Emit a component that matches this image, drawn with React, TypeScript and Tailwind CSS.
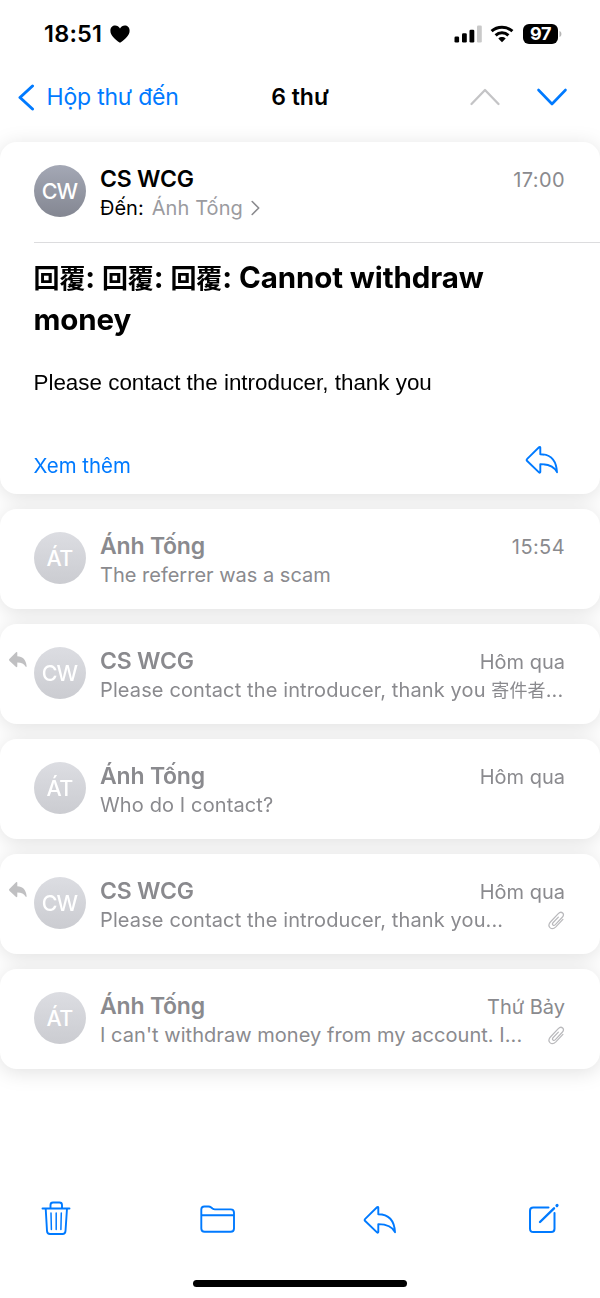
import type { ReactNode } from "react";

// ─── Data ──────────────────────────────────────────────────────

type Message = {
  initials: string;
  sender: string;
  preview: ReactNode;
  time: string;
  replied?: boolean;
  attachment?: boolean;
};

const MESSAGES: Message[] = [
  {
    initials: "ÁT",
    sender: "Ánh Tống",
    preview: <span className="tracking-normal">The referrer was a scam</span>,
    time: "15:54",
  },
  {
    initials: "CW",
    sender: "CS WCG",
    preview: (
      <>
        Please contact the introducer, thank you <span className="text-[18px]">寄件者</span>...
      </>
    ),
    time: "Hôm qua",
    replied: true,
  },
  { initials: "ÁT", sender: "Ánh Tống", preview: "Who do I contact?", time: "Hôm qua" },
  {
    initials: "CW",
    sender: "CS WCG",
    preview: "Please contact the introducer, thank you...",
    time: "Hôm qua",
    replied: true,
    attachment: true,
  },
  {
    initials: "ÁT",
    sender: "Ánh Tống",
    preview: <span className="tracking-[0.05px]">I can't withdraw money from my account. I...</span>,
    time: "Thứ Bảy",
    attachment: true,
  },
];

// ─── Icons ─────────────────────────────────────────────────────

function ReplyIcon() {
  return (
    <svg width="34" height="30" viewBox="0 0 34 30" fill="none" stroke="currentColor" strokeWidth="1.9" strokeLinecap="round" strokeLinejoin="round">
      <path d="M15.3 2.6v6.6C25.5 9.2 31.3 15 32 27.2c-2.6-5.6-7.6-8.1-16.7-8.1v7.8c0 .9-.7 1-1.3.4L2.2 16c-.8-.8-.8-1.4 0-2.2L14 2.3c.6-.6 1.3-.5 1.3.3Z" />
    </svg>
  );
}

function RepliedIcon() {
  return (
    <svg width="18" height="16" viewBox="0 0 18 16" fill="#c0c0c2">
      <path d="M8.3.8v3.5c5.4.1 8.8 3.5 9.3 9.8.1.9-.6 1.2-1.1.4-1.5-2.7-3.9-3.9-8.2-3.9v3.7c0 1-.8 1.2-1.5.5L.6 9c-.8-.8-.8-1.5 0-2.2L6.8.4C7.5-.3 8.3-.1 8.3.8Z" />
    </svg>
  );
}

function PaperclipIcon() {
  return (
    <svg width="17" height="19" viewBox="0 0 18 20" fill="none" stroke="#b9b9bc" strokeWidth="1.3" strokeLinecap="round" strokeLinejoin="round">
      <path d="M15.8 8.8 8.3 16.7c-2 2-4.6 2.3-6.2.8-1.6-1.6-1.3-4.1.7-6.2l8.1-8.6c1.5-1.5 3.4-1.7 4.6-.6 1.2 1.2 1 3-.4 4.5l-7.3 7.7c-.9.9-1.9 1-2.6.4-.7-.7-.6-1.7.3-2.6l5.5-5.7" />
    </svg>
  );
}

function StatusIcons() {
  return (
    <div className="flex items-center">
      <svg width="28" height="19" viewBox="0 0 28 19">
        <rect x="0.5" y="11.5" width="4.6" height="6" rx="1.3" />
        <rect x="8" y="8.3" width="4.8" height="9.2" rx="1.3" />
        <rect x="15.5" y="4.7" width="4.8" height="12.8" rx="1.3" />
        <rect x="23" y="0.5" width="4.8" height="17" rx="1.3" fill="#c9c9c9" />
      </svg>
      <svg className="ml-2" width="24" height="18" viewBox="0 0 24 18" fill="none" stroke="#000" strokeWidth="3">
        <path d="M1.6 6.2C7.3.9 16.7.9 22.4 6.2" />
        <path d="M5.6 10.4C9.2 7 14.8 7 18.4 10.4" />
        <path d="M12 17.2 8.3 13.5c2.2-1.9 5.2-1.9 7.4 0Z" fill="#000" stroke="none" />
      </svg>
      <div className="ml-[9px] flex h-5 w-[35px] items-center justify-center rounded-md bg-black text-[18px] leading-5 font-bold tracking-[-0.3px] text-white">
        97
      </div>
      <svg className="ml-px" width="3" height="8" viewBox="0 0 3 8" fill="#b5b5b5">
        <path d="M0.5 1C1.9 1.7 2.4 2.7 2.4 4s-.5 2.3-1.9 3Z" />
      </svg>
    </div>
  );
}

// ─── Components ────────────────────────────────────────────────

function Avatar({ initials, faded }: { initials: string; faded?: boolean }) {
  return (
    <div
      className={`flex size-[52px] shrink-0 items-center justify-center rounded-full bg-linear-to-b pt-px text-[21.5px] font-medium tracking-[-0.8px] text-white ${
        faded ? "from-[#dcdde2] to-[#cbccd1]" : "from-[#a4a8b5] to-[#848792]"
      }`}
    >
      {initials}
    </div>
  );
}

function Time({ value }: { value: string }) {
  return (
    <span className={`text-[20px] text-[#8a8a8e] ${value.includes(":") ? "tracking-[0.4px]" : "tracking-normal"}`}>
      {value}
    </span>
  );
}

function Card({ children }: { children: ReactNode }) {
  return <section className="rounded-[17px] bg-white">{children}</section>;
}

function MessageRow({ message }: { message: Message }) {
  return (
    <Card>
      <div className="flex h-[100.5px] pt-[23.5px] pr-[35px]">
        <div className="flex w-[33.5px] shrink-0 pt-[5px] pl-[9px]">{message.replied && <RepliedIcon />}</div>
        <Avatar initials={message.initials} faded />
        <div className="ml-[14.5px] flex min-w-0 flex-1 flex-col pt-px text-[#8a8a8e]">
          <div className="flex h-[27px] items-center justify-between">
            <span className="text-[23px] font-semibold tracking-[-0.2px]">{message.sender}</span>
            <Time value={message.time} />
          </div>
          <div className="flex h-[30px] items-center justify-between">
            <span className="text-[20px] tracking-[0.12px] whitespace-nowrap">{message.preview}</span>
            {message.attachment && <PaperclipIcon />}
          </div>
        </div>
      </div>
    </Card>
  );
}

export default function App() {
  return (
    <main className="flex h-[1298px] w-[600px] flex-col overflow-hidden bg-white font-['Inter','Noto_Sans_CJK_TC',sans-serif] text-black">
      {/* Status bar */}
      <header className="flex h-[68px] items-center justify-between pr-[38px] pl-11">
        <div className="flex items-center gap-2">
          <span className="text-[23.5px] font-semibold tracking-[0.2px]">18:51</span>
          <svg width="20" height="18" viewBox="0 0 20 18">
            <path d="M10 17.8C4.5 14 .4 10.3.4 5.7.4 2.6 2.5.6 5.2.6c2 0 3.7 1.1 4.8 2.9C11.1 1.7 12.8.6 14.8.6c2.7 0 4.8 2 4.8 5.1 0 4.6-4.1 8.3-9.6 12.1Z" />
          </svg>
        </div>
        <StatusIcons />
      </header>

      {/* Navigation */}
      <nav className="grid h-[58px] grid-cols-[1fr_auto_1fr] items-center px-[18px]">
        <a className="flex items-center gap-[11.5px] text-[#007aff]">
          <svg width="17" height="27" viewBox="0 0 17 27" fill="none" stroke="currentColor" strokeWidth="3" strokeLinecap="round" strokeLinejoin="round">
            <path d="M14.5 2 2 13.5 14.5 25" />
          </svg>
          <span className="text-[23px] tracking-[-0.2px] whitespace-nowrap">Hộp thư đến</span>
        </a>
        <h1 className="text-center text-[23px] font-semibold">6 thư</h1>
        <div className="flex justify-end gap-[35px] pr-3.5">
          <svg width="32" height="18" viewBox="0 0 32 18" fill="none" stroke="#c4c4c6" strokeWidth="2.3" strokeLinecap="round" strokeLinejoin="round">
            <path d="M2.5 16 16 2l13.5 14" />
          </svg>
          <svg width="32" height="18" viewBox="0 0 32 18" fill="none" stroke="#007aff" strokeWidth="2.6" strokeLinecap="round" strokeLinejoin="round">
            <path d="M2.500 2 16 16 29.500 2" />
          </svg>
        </div>
      </nav>

      {/* Thread */}
      <div className="mt-[15.5px] flex flex-col gap-[14.5px] drop-shadow-[0_3px_10px_rgba(0,0,0,0.12)]">
        <Card>
          <div className="flex h-[352.5px] flex-col pl-[33.5px]">
            <div className="flex h-[101px] shrink-0 border-b border-[#dcdcde] pt-[23.5px] pr-[35px]">
              <Avatar initials="CW" />
              <div className="ml-[14.5px] flex flex-1 flex-col pt-px">
                <div className="flex h-[27px] items-center justify-between">
                  <span className="text-[23px] font-semibold tracking-[-0.2px]">CS WCG</span>
                  <Time value="17:00" />
                </div>
                <div className="flex h-[30px] items-center text-[20px]">
                  <span>Đến:</span>
                  <span className="ml-2 tracking-[0.1px] text-[#9b9b9f]">Ánh Tống</span>
                  <svg className="ml-2" width="9" height="16" viewBox="0 0 9 16" fill="none" stroke="#8a8a8e" strokeWidth="1.6" strokeLinecap="round" strokeLinejoin="round">
                    <path d="m1.200 1.500 6.500 6.500-6.500 6.500" />
                  </svg>
                </div>
              </div>
            </div>
            <h2 className="mt-[13.5px] text-[29.5px] leading-[42px] font-bold tracking-[-0.1px]">
              {[0, 1, 2].map((n) => (
                <span key={n}>
                  <span className="text-[26px] leading-none">回覆</span>:{" "}
                </span>
              ))}
              Cannot withdraw
              <br />
              money
            </h2>
            <p className="mt-[29px] font-['Liberation_Sans',sans-serif] text-[22.4px] leading-7">
              Please contact the introducer, thank you
            </p>
            <div className="mt-auto flex h-[69px] items-start justify-between pr-[41px] text-[#007aff]">
              <span className="pt-[26.5px] text-[20.4px] leading-7">Xem thêm</span>
              <div className="pt-5">
                <ReplyIcon />
              </div>
            </div>
          </div>
        </Card>
        {MESSAGES.map((message, i) => (
          <MessageRow key={i} message={message} />
        ))}
      </div>

      {/* Toolbar */}
      <footer className="mt-auto flex h-[118px] flex-col items-center text-[#007aff]">
        <div className="flex w-full items-start pt-5 pl-[41px]">
          <svg width="30" height="36" viewBox="0 0 30 36" fill="none" stroke="currentColor" strokeWidth="1.9" strokeLinecap="round" strokeLinejoin="round">
            <path d="M1.5 8.5h27M9.5 8V5Q9.5 2.5 12 2.5h6.5Q21 2.5 21 5v3M4.7 8.5 6 31Q6.2 34 9 34h12.5q2.8 0 3-3L26 8.5" />
            <path d="m10 13 .4 16.5M15.2 13v16.5M20.3 13l-.4 16.5" strokeWidth="1.5" />
          </svg>
          <svg className="mt-1 ml-[128.5px]" width="36" height="30" viewBox="0 0 36 30" fill="none" stroke="currentColor" strokeWidth="1.9" strokeLinejoin="round">
            <path d="M1.3 24.5v-19q0-3 3-3h4.2q1.5 0 2.7 1l1.3 1.1q1 .8 2.5.8h15.7q3.3 0 3.3 3.3v15.8q0 3.3-3.3 3.3H4.6q-3.3 0-3.3-3.3ZM1.3 11.2H34" />
          </svg>
          <div className="mt-[5px] ml-[127.5px]">
            <ReplyIcon />
          </div>
          <svg className="mt-[3px] ml-[131px]" width="32" height="32" viewBox="0 0 32 32" fill="none" stroke="currentColor" strokeWidth="2" strokeLinecap="round" strokeLinejoin="round">
            <path d="M20.5 4.5H5.3q-3.3 0-3.3 3.3v17.9Q2 29 5.3 29h17.9q3.3 0 3.3-3.3V10" />
            <path d="M12 19 26 5.3" strokeWidth="2.4" />
            <path d="m28.9 2.6.2-.2" strokeWidth="3" />
          </svg>
        </div>
        <div className="mt-auto mb-[11px] h-[7px] w-[214px] rounded-full bg-black" />
      </footer>
    </main>
  );
}
